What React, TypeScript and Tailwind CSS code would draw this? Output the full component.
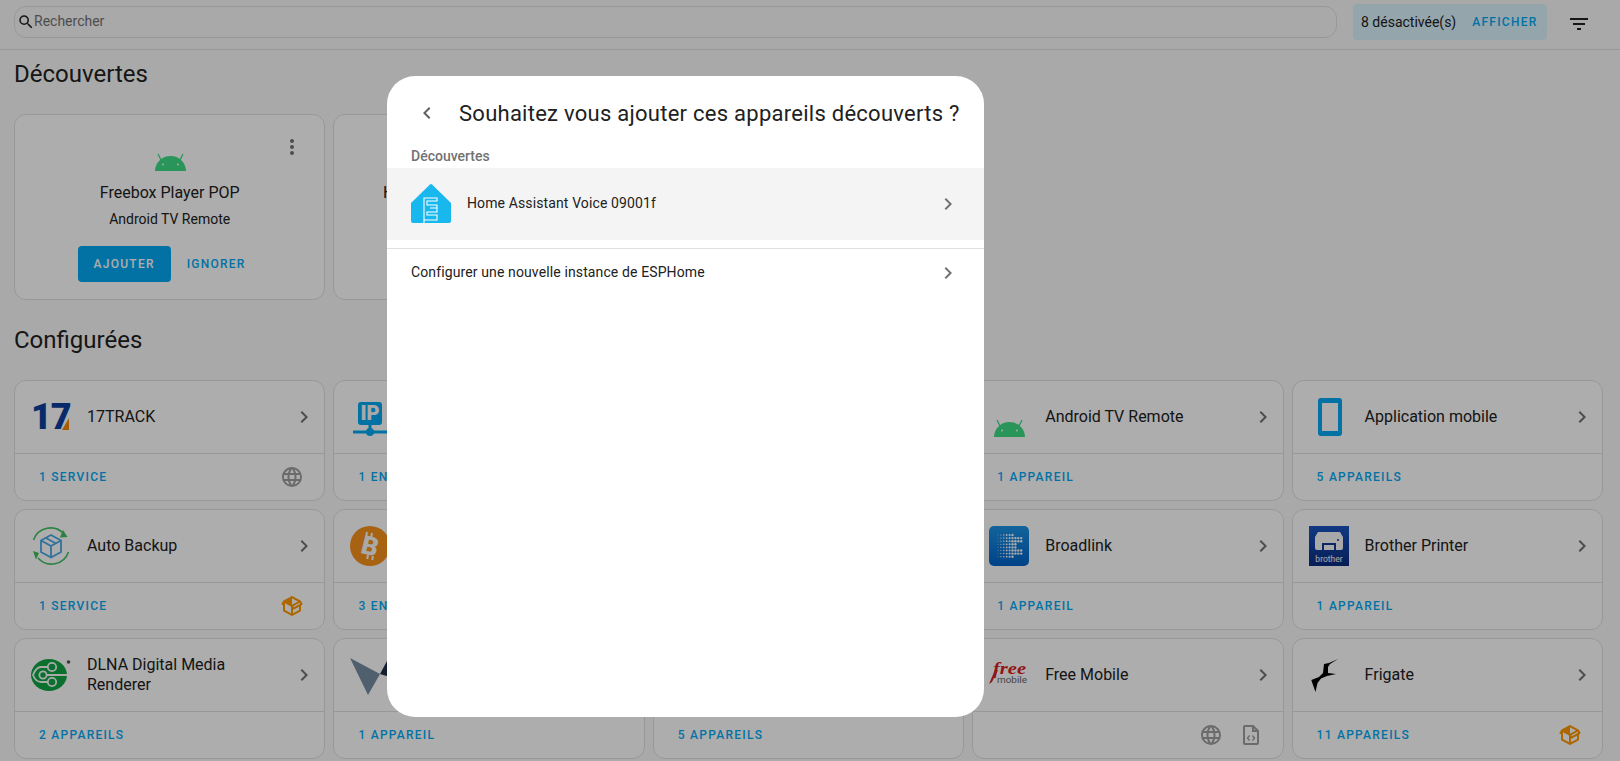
import React from 'react';
import { MdSearch, MdFilterList, MdMoreVert, MdChevronRight, MdChevronLeft } from 'react-icons/md';

const webPath = "M16.36,14C16.44,13.34 16.5,12.68 16.5,12C16.5,11.32 16.44,10.66 16.36,10H19.74C19.9,10.64 20,11.31 20,12C20,12.69 19.9,13.36 19.74,14M14.59,19.56C15.19,18.45 15.65,17.25 15.97,16H18.92C17.96,17.65 16.43,18.93 14.59,19.56M14.34,14H9.66C9.56,13.34 9.5,12.68 9.5,12C9.5,11.32 9.56,10.65 9.66,10H14.34C14.43,10.65 14.5,11.32 14.5,12C14.5,12.68 14.43,13.34 14.34,14M12,19.96C11.17,18.76 10.5,17.43 10.09,16H13.91C13.5,17.43 12.83,18.76 12,19.96M8,8H5.08C6.03,6.34 7.57,5.06 9.4,4.44C8.8,5.55 8.35,6.75 8,8M5.08,16H8C8.35,17.25 8.8,18.45 9.4,19.56C7.57,18.93 6.03,17.65 5.08,16M4.26,14C4.1,13.36 4,12.69 4,12C4,11.31 4.1,10.64 4.26,10H7.64C7.56,10.66 7.5,11.32 7.5,12C7.5,12.68 7.56,13.34 7.64,14M12,4.03C12.83,5.23 13.5,6.57 13.91,8H10.09C10.5,6.57 11.17,5.23 12,4.03M18.92,8H15.97C15.65,6.75 15.19,5.55 14.59,4.44C16.43,5.07 17.96,6.34 18.92,8M12,2C6.47,2 2,6.5 2,12A10,10 0 0,0 12,22A10,10 0 0,0 22,12A10,10 0 0,0 12,2Z";
const packagePath = "M2,10.96C1.5,10.68 1.35,10.07 1.63,9.59L3.13,7C3.24,6.8 3.41,6.66 3.6,6.58L11.43,2.18C11.59,2.06 11.79,2 12,2C12.21,2 12.41,2.06 12.57,2.18L20.47,6.62C20.66,6.72 20.82,6.88 20.91,7.08L22.36,9.6C22.64,10.08 22.47,10.69 22,10.96L21,11.54V16.5C21,16.88 20.79,17.21 20.47,17.38L12.57,21.82C12.41,21.94 12.21,22 12,22C11.79,22 11.59,21.94 11.43,21.82L3.53,17.38C3.21,17.21 3,16.88 3,16.5V10.96C2.7,11.13 2.32,11.14 2,10.96M12,4.15V4.15L12,10.85V10.85L17.96,7.5L12,4.15M5,15.91L11,19.29V12.58L5,9.21V15.91M19,15.91V12.69L14,15.59C13.67,15.77 13.3,15.76 13,15.6V19.29L19,15.91M13.85,13.36L20.13,9.73L19.55,8.72L13.27,12.35L13.85,13.36Z";

function WebIcon() {
  return <svg viewBox="0 0 24 24" className="w-6 h-6 fill-[#9e9e9e]"><path d={webPath} /></svg>;
}
function PackageIcon() {
  return <svg viewBox="0 0 24 24" className="w-6 h-6 fill-[#ff9800]"><path d={packagePath} /></svg>;
}
function FileCodeIcon() {
  return (
    <svg viewBox="0 0 24 24" className="w-6 h-6 fill-none stroke-[#9e9e9e]">
      <path d="M6 3h8l5 5v12a1 1 0 0 1-1 1H6a1 1 0 0 1-1-1V4a1 1 0 0 1 1-1z M14 3v5h5" strokeWidth="2" />
      <path d="M10.5 12.5L8.5 15l2 2.5 M13.5 12.5l2 2.5-2 2.5" strokeWidth="1.4" />
    </svg>
  );
}

function AndroidIcon() {
  return (
    <svg viewBox="0 0 40 40" className="w-10 h-10">
      <path d="M5 40A15.5 15 0 0 1 36 40Z" fill="#3ddc84" />
      <path d="M11 29l-3-6 M30 29l3-6" stroke="#3ddc84" strokeWidth="1.3" />
      <circle cx="13" cy="33.5" r="1" fill="#fafafa" />
      <circle cx="28" cy="33.5" r="1" fill="#fafafa" />
    </svg>
  );
}
function TrackIcon() {
  return (
    <svg viewBox="0 0 40 40" className="w-10 h-10">
      <text x="0" y="32" fontFamily="Roboto, sans-serif" fontWeight="900" fontSize="36" letterSpacing="-1" fill="#0c3f9c">17</text>
      <polygon points="31,33 38,33 38,21" fill="#f48a0a" />
    </svg>
  );
}
function IpIcon() {
  return (
    <svg viewBox="0 0 40 40" className="w-10 h-10">
      <rect x="8" y="5" width="24" height="23" rx="3" fill="#03a9f4" />
      <text x="20" y="23" textAnchor="middle" fontFamily="Roboto, sans-serif" fontWeight="900" fontSize="20" fill="#fafafa">IP</text>
      <path d="M20 28v7 M3 35h34" stroke="#03a9f4" strokeWidth="3" />
      <circle cx="20" cy="35" r="4" fill="#03a9f4" />
    </svg>
  );
}
function BackupIcon() {
  return (
    <svg viewBox="0 0 40 40" className="w-10 h-10 fill-none">
      <path d="M2.5 14A18 18 0 0 1 33 8 M37.5 26A18 18 0 0 1 7 32" stroke="#3fbf5f" strokeWidth="1.6" />
      <path d="M32 4l4.500 7-7.500 0.500z M2 25l6 2-3 6.500z" fill="#3fbf5f" />
      <path d="M20 9l10 5.500v11.500l-10 5.500-10-5.500V14.500z M10 14.500l10 5.500 10-5.500 M20 20v11.500 M15 12l10 5.500" stroke="#48a9e6" strokeWidth="1.8" />
    </svg>
  );
}
function BitcoinIcon() {
  return (
    <svg viewBox="0 0 40 40" className="w-10 h-10">
      <circle cx="20" cy="20" r="20" fill="#f7931a" />
      <text x="20" y="29" textAnchor="middle" transform="rotate(14 20 20)" fontFamily="Roboto, sans-serif" fontWeight="900" fontSize="26" fill="#fafafa">B</text>
      <path d="M17 6l-.8 4 M22 7l-.8 4 M18 29l-.8 4 M23 30l-.8 4" stroke="#fafafa" strokeWidth="2" />
    </svg>
  );
}
function DlnaIcon() {
  return (
    <svg viewBox="0 0 40 40" className="w-10 h-10">
      <ellipse cx="18" cy="20" rx="18" ry="16" fill="#0fa544" />
      <path d="M17 12H10C6 12 4 15 2 20C4 25 6 27 10 27H17 M15 20H36" stroke="#fafafa" strokeWidth="1.8" fill="none" />
      <circle cx="21" cy="12" r="4.200" fill="#0fa544" stroke="#fafafa" strokeWidth="1.8" />
      <circle cx="21" cy="27" r="4.200" fill="#0fa544" stroke="#fafafa" strokeWidth="1.8" />
      <circle cx="12" cy="20" r="3.600" fill="#0fa544" stroke="#fafafa" strokeWidth="1.800" />
      <circle cx="37.500" cy="7" r="1.800" fill="#555" />
    </svg>
  );
}
function TriangleIcon() {
  return (
    <svg viewBox="0 0 40 40" className="w-10 h-10">
      <polygon points="0,3 30,19 18,40" fill="#778ca3" />
      <polygon points="30,19 37,6 40,22" fill="#1f2f47" />
    </svg>
  );
}
function BroadlinkIcon() {
  const dots: React.ReactElement[] = [];
  for (let row = 0; row < 8; row++) {
    for (let col = 0; col < 9; col++) {
      const notch = col > 5 && (row === 0 || row === 7 || ((row === 3 || row === 4) && col > 6));
      if (notch) continue;
      dots.push(<circle key={`${row}-${col}`} cx={9 + col * 2.9} cy={9 + row * 3.1} r={col > 4 ? 1.2 : 0.45 + col * 0.15} fill="#fafafa" />);
    }
  }
  return (
    <svg viewBox="0 0 40 40" className="w-10 h-10">
      <defs>
        <linearGradient id="blGrad" x1="0" y1="0" x2="0" y2="1">
          <stop offset="0" stopColor="#1b93e6" />
          <stop offset="1" stopColor="#0062c8" />
        </linearGradient>
      </defs>
      <rect width="40" height="40" rx="5" fill="url(#blGrad)" />
      {dots}
    </svg>
  );
}
function BrotherIcon() {
  return (
    <svg viewBox="0 0 40 40" className="w-10 h-10">
      <defs>
        <linearGradient id="brGrad" x1="0" y1="0" x2="0" y2="1">
          <stop offset="0" stopColor="#1a55c0" />
          <stop offset="1" stopColor="#0a2c80" />
        </linearGradient>
      </defs>
      <rect width="40" height="40" fill="url(#brGrad)" />
      <path d="M9 6h22l3 5v11a2 2 0 0 1-2 2H8a2 2 0 0 1-2-2V11z" fill="#fafafa" />
      <rect x="13" y="17" width="14" height="8" fill="#123a96" />
      <rect x="15" y="19" width="10" height="5" fill="#fafafa" />
      <circle cx="29" cy="14" r="1" fill="#123a96" />
      <text x="20" y="36" textAnchor="middle" fontFamily="Roboto, sans-serif" fontSize="8.5" fill="#fafafa">brother</text>
    </svg>
  );
}
function FreeIcon() {
  return (
    <svg viewBox="0 0 40 40" className="w-10 h-10">
      <text x="4" y="19" textLength="33" lengthAdjust="spacingAndGlyphs" fontFamily="'Liberation Serif', serif" fontStyle="italic" fontWeight="700" fontSize="17" fill="#d81f26">free</text>
      <polygon points="6,15 9,15 3,27 0,29" fill="#d81f26" />
      <text x="8" y="28" textLength="30" lengthAdjust="spacingAndGlyphs" fontFamily="Roboto, sans-serif" fontSize="9" fill="#666">mobile</text>
    </svg>
  );
}
function FrigateIcon() {
  return (
    <svg viewBox="0 0 40 40" className="w-10 h-10">
      <path d="M2.300 25L10 22L14 18L15 9L20 8L29 4L21 9L19 12L19 18L27 19L18 21L12 23.500L8.500 28L6.500 37L4 30Z" fill="#000" />
    </svg>
  );
}
function MobileIcon() {
  return (
    <svg viewBox="0 0 40 40" className="w-10 h-10">
      <rect x="9" y="1" width="24" height="38" rx="3" fill="#03a9f4" />
      <rect x="13" y="6" width="16" height="28" fill="#fff" />
    </svg>
  );
}
function EspIcon() {
  return (
    <svg viewBox="0 0 40 40" className="w-10 h-10 shrink-0">
      <path d="M19 1.500a1.500 1.500 0 0 1 2 0L40 20v18a2 2 0 0 1-2 2H2a2 2 0 0 1-2-2V20z" fill="#18b7ee" />
      <path d="M13 40V15h13v3H16v4h10v3h-7M26 25v4H16v3h10v5H13" fill="none" stroke="#fff" strokeWidth="1.1" />
    </svg>
  );
}

type Integration = {
  name: string;
  icon?: React.ReactNode;
  label?: string;
  badges?: React.ReactNode[];
};

const integrations: Integration[] = [
  { name: '17TRACK', icon: <TrackIcon />, label: '1 service', badges: [<WebIcon />] },
  { name: 'Adresse IP', icon: <IpIcon />, label: '1 entité' },
  { name: '' },
  { name: 'Android TV Remote', icon: <AndroidIcon />, label: '1 appareil' },
  { name: 'Application mobile', icon: <MobileIcon />, label: '5 appareils' },
  { name: 'Auto Backup', icon: <BackupIcon />, label: '1 service', badges: [<PackageIcon />] },
  { name: 'Bitcoin', icon: <BitcoinIcon />, label: '3 entités' },
  { name: '' },
  { name: 'Broadlink', icon: <BroadlinkIcon />, label: '1 appareil' },
  { name: 'Brother Printer', icon: <BrotherIcon />, label: '1 appareil' },
  { name: 'DLNA Digital Media Renderer', icon: <DlnaIcon />, label: '2 appareils' },
  { name: 'ESPHome', icon: <TriangleIcon />, label: '1 appareil' },
  { name: '', label: '5 appareils' },
  { name: 'Free Mobile', icon: <FreeIcon />, badges: [<WebIcon />, <FileCodeIcon />] },
  { name: 'Frigate', icon: <FrigateIcon />, label: '11 appareils', badges: [<PackageIcon />] },
];

function IntegrationCard({ item }: { item: Integration }) {
  return (
    <div className="h-[121px] border border-[#e0e0e0] rounded-xl bg-white flex flex-col">
      <div className="h-[72px] pl-4 pr-2 flex items-center border-b border-[#e0e0e0] box-content">
        <div className="w-10 h-10 shrink-0">{item.icon}</div>
        <div className="ml-4 flex-1 text-base leading-5 text-[#212121]">{item.name}</div>
        <MdChevronRight className="w-6 h-6 text-[#727272] ml-2" />
      </div>
      <div className="flex-1 pl-6 pr-5 flex items-center justify-between">
        <span className="text-[12px] font-medium uppercase tracking-[1.25px] text-[#03a9f4]">{item.label}</span>
        <div className="flex gap-4">
          {item.badges?.map((badge, index) => <span key={index}>{badge}</span>)}
        </div>
      </div>
    </div>
  );
}

function DiscoveredCard({ icon, title, subtitle }: { icon: React.ReactNode; title: string; subtitle: string }) {
  return (
    <div className="relative h-[186px] border border-[#e0e0e0] rounded-xl bg-white flex flex-col items-center pt-4">
      <MdMoreVert className="absolute top-5 right-5 w-6 h-6 text-[#727272]" />
      <div className="w-10 h-10">{icon}</div>
      <div className="mt-[10px] text-base leading-6 text-[#212121] whitespace-nowrap">{title}</div>
      <div className="mt-1 text-sm leading-5 text-[#212121]">{subtitle}</div>
      <div className="mt-[17px] flex items-center gap-4 -ml-4">
        <button className="h-9 w-[93px] rounded bg-[#03a9f4] text-white text-[12px] font-medium tracking-[1.25px]">AJOUTER</button>
        <button className="text-[12px] font-medium tracking-[1.25px] text-[#03a9f4]">IGNORER</button>
      </div>
    </div>
  );
}

export default function App() {
  return (
    <div className="relative h-screen overflow-hidden bg-[#fafafa] font-['Roboto',sans-serif]">
      {/* barre de recherche */}
      <div className="h-[50px] pl-[14px] pr-[29px] flex items-center border-b border-[#e0e0e0]">
        <div className="flex-1 h-8 -mt-[6px] border border-[#e0e0e0] rounded-xl bg-[#fafafa] flex items-center pl-[2px]">
          <MdSearch className="w-[18px] h-[18px] text-[#212121]" />
          <span className="-ml-px -mt-px text-sm text-[#727272]">Rechercher</span>
        </div>
        <div className="ml-4 w-[194px] h-9 -mt-[5px] rounded bg-[#dbf3fe] flex items-center pl-2 text-sm text-[#212121]">
          <span>8 désactivée(s)</span>
          <span className="ml-4 mt-px text-[12px] font-medium tracking-[1.25px] text-[#03a9f4]">AFFICHER</span>
        </div>
        <MdFilterList className="ml-5 w-6 h-6 -mt-[2px] text-[#212121]" />
      </div>

      <h2 className="ml-[14px] mt-2 text-2xl leading-8 text-[#212121]">Découvertes</h2>
      <div className="mt-6 pl-[14px] pr-[17px] grid grid-cols-5 gap-x-2">
        <DiscoveredCard icon={<AndroidIcon />} title="Freebox Player POP" subtitle="Android TV Remote" />
        <DiscoveredCard icon={<EspIcon />} title="Home Assistant Voice 09001f" subtitle="ESPHome" />
      </div>

      <h2 className="ml-[14px] mt-6 text-2xl leading-8 text-[#212121]">Configurées</h2>
      <div className="mt-6 pl-[14px] pr-[17px] grid grid-cols-5 gap-2">
        {integrations.map((item, index) => <IntegrationCard key={index} item={item} />)}
      </div>

      {/* dialogue */}
      <div className="fixed inset-0 bg-black/32 flex justify-center pt-[76px] pr-[249px]">
        <div className="w-[597px] h-[641px] rounded-[28px] bg-white">
          <div className="h-[74px] pl-7 flex items-center">
            <MdChevronLeft className="w-6 h-6 text-[#616161]" />
            <span className="ml-5 text-[22px] tracking-[0.26px] text-[#212121] whitespace-nowrap">Souhaitez vous ajouter ces appareils découverts ?</span>
          </div>
          <div className="pl-6 h-3 flex items-center text-sm font-medium text-[#727272]">Découvertes</div>
          <div className="mt-[6px] h-[72px] bg-[#f4f4f4] pl-6 pr-6 flex items-center">
            <div className="-mt-[2px]"><EspIcon /></div>
            <span className="ml-4 flex-1 text-sm tracking-[0.12px] text-[#212121] -mt-[2px]">Home Assistant Voice 09001f</span>
            <MdChevronRight className="w-6 h-6 text-[#727272]" />
          </div>
          <div className="mt-2 border-t border-[#e0e0e0] h-12 pl-6 pr-6 flex items-center">
            <span className="flex-1 text-sm tracking-[0.12px] text-[#212121] -mt-[2px]">Configurer une nouvelle instance de ESPHome</span>
            <MdChevronRight className="w-6 h-6 text-[#727272]" />
          </div>
        </div>
      </div>
    </div>
  );
}
